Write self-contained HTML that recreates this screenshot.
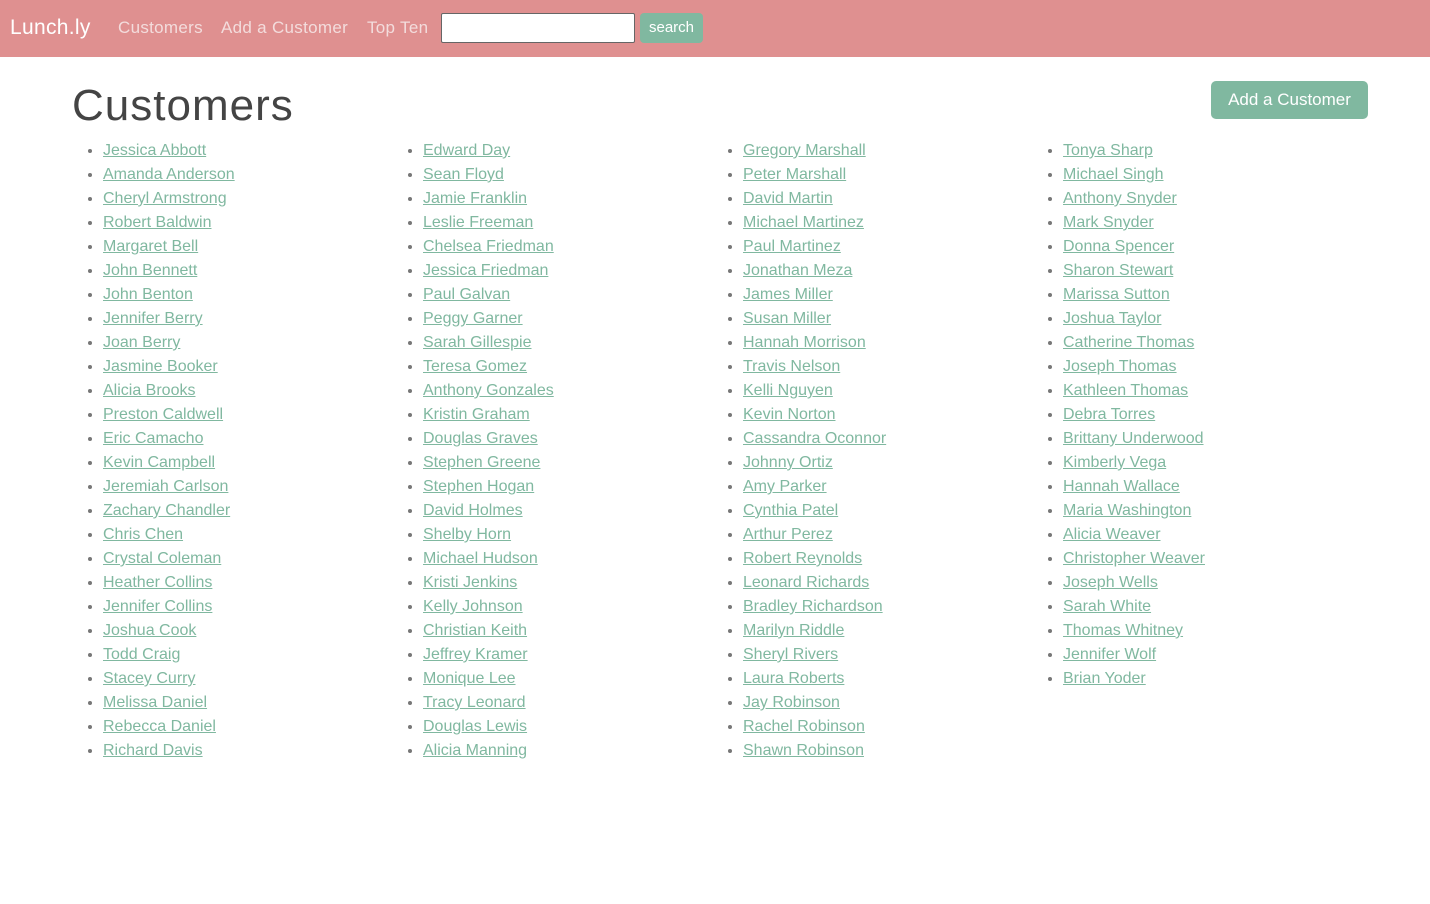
<!DOCTYPE html>
<html><head><style>
body{margin:0;font-family:"Liberation Sans",sans-serif;background:#fff;}
nav{height:57px;background:#df9090;position:relative;}
nav span{position:absolute;top:18px;font-size:17px;color:#f3dcdc;letter-spacing:0.3px;}
nav .brand{left:10px;top:16px;font-size:21px;color:#fff;}
nav input{position:absolute;left:441px;top:13px;width:192px;height:28px;border:1px solid #666;border-radius:2px;padding:0;background:#fff;}
nav .s{position:absolute;left:640px;top:13px;width:63px;height:30px;background:#80b8a0;color:#fff;border-radius:4px;font-size:15px;text-align:center;line-height:29px;}
h1{position:absolute;left:72px;top:81px;margin:0;font-size:44px;font-weight:normal;color:#444;letter-spacing:1px;}
.btn{position:absolute;left:1211px;top:81px;width:157px;height:38px;background:#80b8a0;border-radius:5px;color:#fff;font-size:17px;text-align:center;line-height:37px;}
ul{position:absolute;top:139px;margin:0;padding:0 0 0 32px;list-style:disc;color:#777;}
li{height:24px;line-height:24px;font-size:16px;}
li a{color:#80b8a0;text-decoration:underline;}
</style></head><body>
<nav><span class="brand">Lunch.ly</span><span style="left:118px">Customers</span><span style="left:221px">Add a Customer</span><span style="left:367px">Top Ten</span><input><div class="s">search</div></nav>
<h1>Customers</h1>
<div class="btn">Add a Customer</div>
<ul style="left:71px">
<li><a>Jessica Abbott</a></li><li><a>Amanda Anderson</a></li><li><a>Cheryl Armstrong</a></li><li><a>Robert Baldwin</a></li><li><a>Margaret Bell</a></li><li><a>John Bennett</a></li><li><a>John Benton</a></li><li><a>Jennifer Berry</a></li><li><a>Joan Berry</a></li><li><a>Jasmine Booker</a></li><li><a>Alicia Brooks</a></li><li><a>Preston Caldwell</a></li><li><a>Eric Camacho</a></li><li><a>Kevin Campbell</a></li><li><a>Jeremiah Carlson</a></li><li><a>Zachary Chandler</a></li><li><a>Chris Chen</a></li><li><a>Crystal Coleman</a></li><li><a>Heather Collins</a></li><li><a>Jennifer Collins</a></li><li><a>Joshua Cook</a></li><li><a>Todd Craig</a></li><li><a>Stacey Curry</a></li><li><a>Melissa Daniel</a></li><li><a>Rebecca Daniel</a></li><li><a>Richard Davis</a></li>
</ul>
<ul style="left:391px">
<li><a>Edward Day</a></li><li><a>Sean Floyd</a></li><li><a>Jamie Franklin</a></li><li><a>Leslie Freeman</a></li><li><a>Chelsea Friedman</a></li><li><a>Jessica Friedman</a></li><li><a>Paul Galvan</a></li><li><a>Peggy Garner</a></li><li><a>Sarah Gillespie</a></li><li><a>Teresa Gomez</a></li><li><a>Anthony Gonzales</a></li><li><a>Kristin Graham</a></li><li><a>Douglas Graves</a></li><li><a>Stephen Greene</a></li><li><a>Stephen Hogan</a></li><li><a>David Holmes</a></li><li><a>Shelby Horn</a></li><li><a>Michael Hudson</a></li><li><a>Kristi Jenkins</a></li><li><a>Kelly Johnson</a></li><li><a>Christian Keith</a></li><li><a>Jeffrey Kramer</a></li><li><a>Monique Lee</a></li><li><a>Tracy Leonard</a></li><li><a>Douglas Lewis</a></li><li><a>Alicia Manning</a></li>
</ul>
<ul style="left:711px">
<li><a>Gregory Marshall</a></li><li><a>Peter Marshall</a></li><li><a>David Martin</a></li><li><a>Michael Martinez</a></li><li><a>Paul Martinez</a></li><li><a>Jonathan Meza</a></li><li><a>James Miller</a></li><li><a>Susan Miller</a></li><li><a>Hannah Morrison</a></li><li><a>Travis Nelson</a></li><li><a>Kelli Nguyen</a></li><li><a>Kevin Norton</a></li><li><a>Cassandra Oconnor</a></li><li><a>Johnny Ortiz</a></li><li><a>Amy Parker</a></li><li><a>Cynthia Patel</a></li><li><a>Arthur Perez</a></li><li><a>Robert Reynolds</a></li><li><a>Leonard Richards</a></li><li><a>Bradley Richardson</a></li><li><a>Marilyn Riddle</a></li><li><a>Sheryl Rivers</a></li><li><a>Laura Roberts</a></li><li><a>Jay Robinson</a></li><li><a>Rachel Robinson</a></li><li><a>Shawn Robinson</a></li>
</ul>
<ul style="left:1031px">
<li><a>Tonya Sharp</a></li><li><a>Michael Singh</a></li><li><a>Anthony Snyder</a></li><li><a>Mark Snyder</a></li><li><a>Donna Spencer</a></li><li><a>Sharon Stewart</a></li><li><a>Marissa Sutton</a></li><li><a>Joshua Taylor</a></li><li><a>Catherine Thomas</a></li><li><a>Joseph Thomas</a></li><li><a>Kathleen Thomas</a></li><li><a>Debra Torres</a></li><li><a>Brittany Underwood</a></li><li><a>Kimberly Vega</a></li><li><a>Hannah Wallace</a></li><li><a>Maria Washington</a></li><li><a>Alicia Weaver</a></li><li><a>Christopher Weaver</a></li><li><a>Joseph Wells</a></li><li><a>Sarah White</a></li><li><a>Thomas Whitney</a></li><li><a>Jennifer Wolf</a></li><li><a>Brian Yoder</a></li>
</ul>
</body></html>
